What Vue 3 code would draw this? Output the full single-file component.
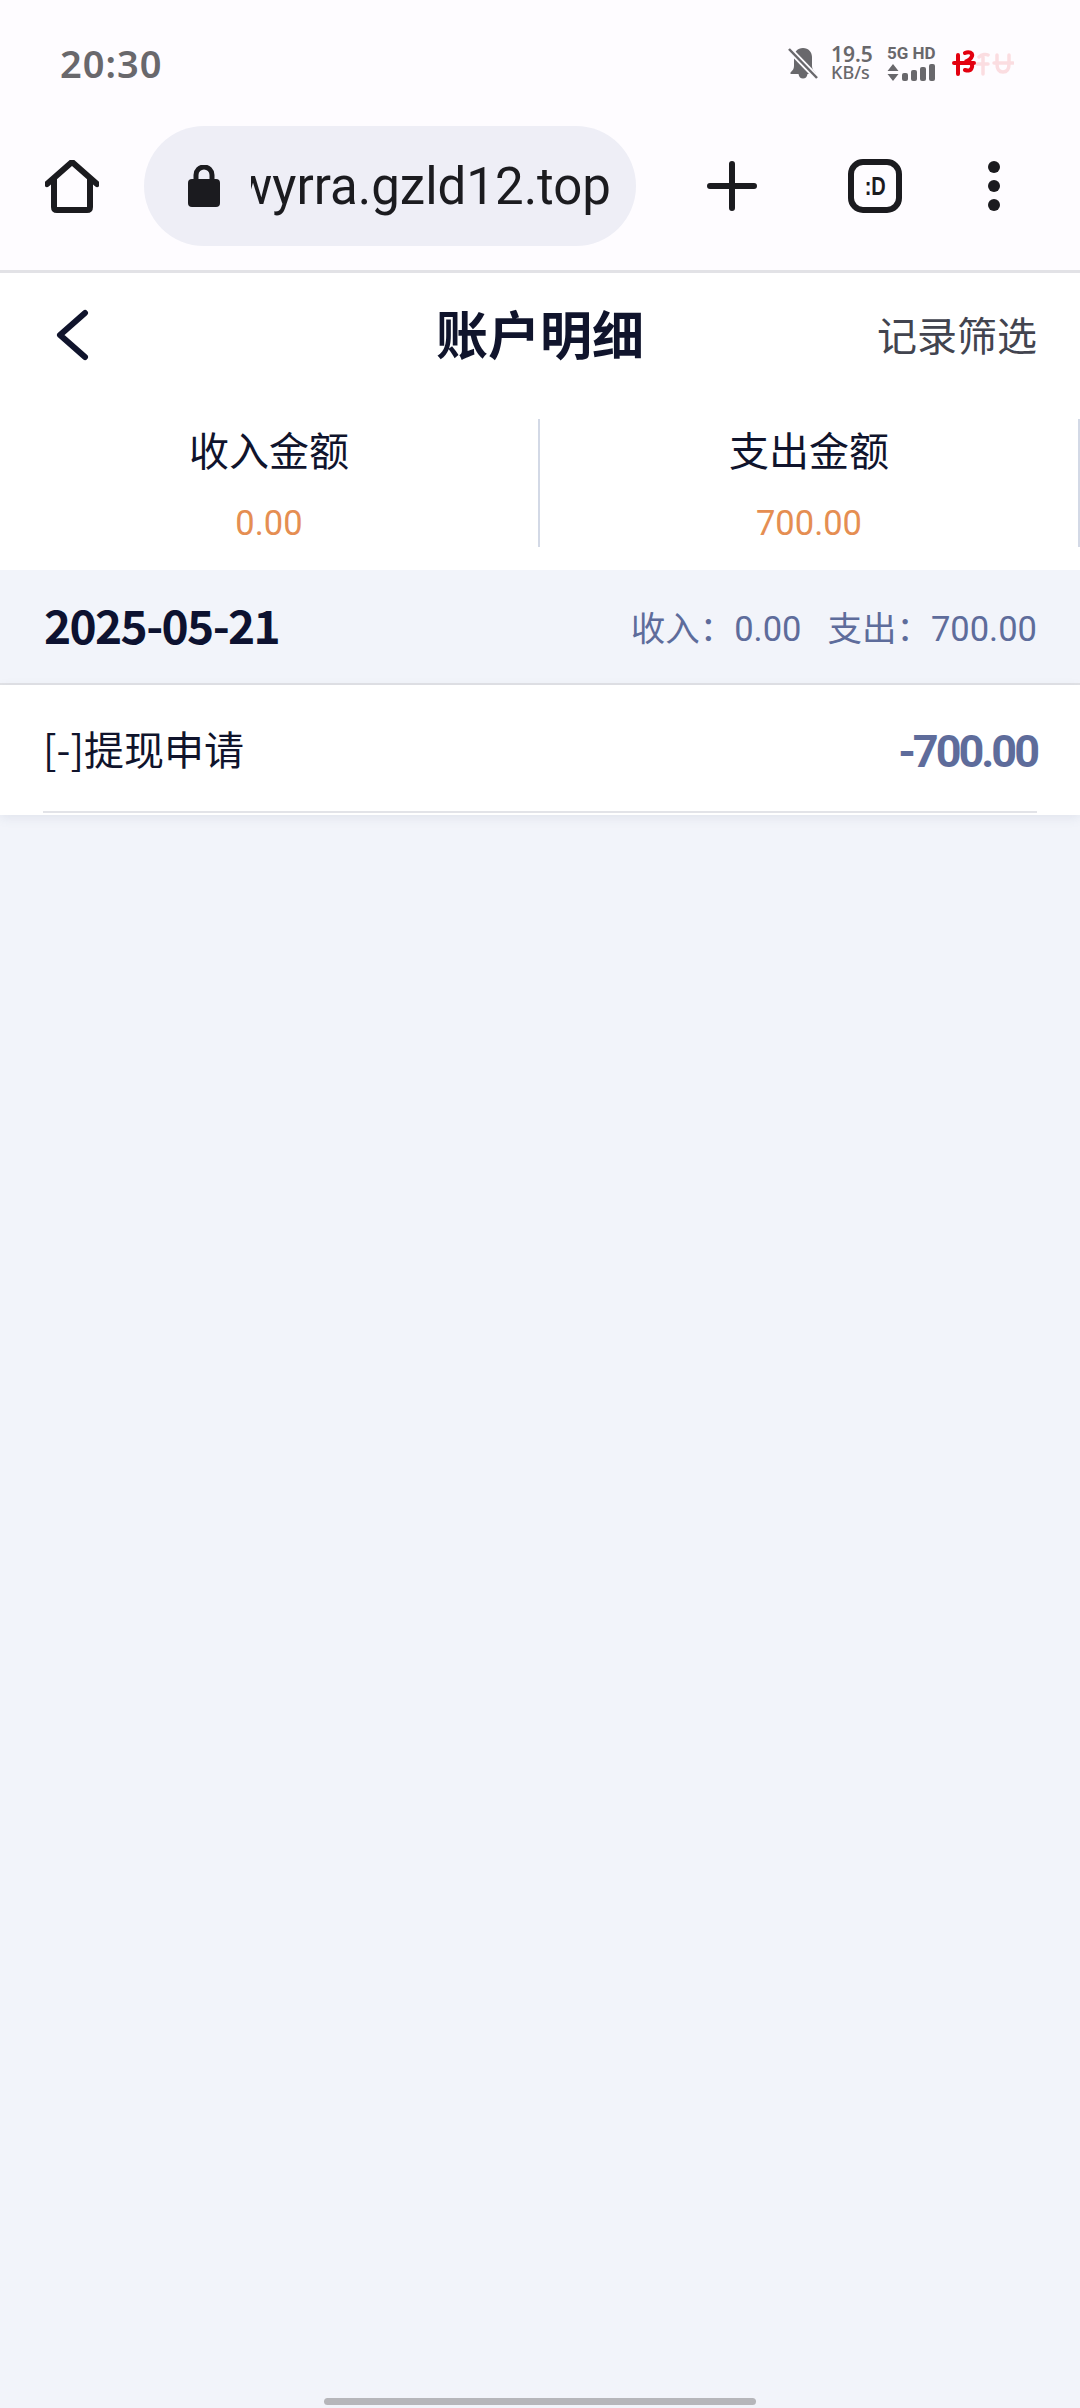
<script setup>
// 账户明细页面的静态数据
const tabs = [
  { label: '收入金额', value: '0.00' },
  { label: '支出金额', value: '700.00' }
]
const signalBars = [8, 11, 14, 17]
</script>

<template>
  <div class="page">
    <div class="chrome">
      <div class="status-bar">
        <span class="time">20:30</span>
        <div class="status-icons">
          <svg class="bell" width="30" height="34" viewBox="0 0 30 34">
            <path d="M15 2c-5.500 0-9 4-9 9v9c0 3-1.500 4.500-3.500 6.500v1.500h8c.5 3 2 4.500 4.500 4.500s4-1.500 4.500-4.500h8v-1.500c-2-2-3.500-3.500-3.500-6.500v-9c0-5-3.500-9-9-9z" fill="#69686c" />
            <path d="M1 3l28 29" stroke="#fefcff" stroke-width="6" />
            <path d="M1 3l28 29" stroke="#69686c" stroke-width="2.500" />
          </svg>
          <div class="speed">
            <span class="speed-num">19.5</span>
            <span class="speed-unit">KB/s</span>
          </div>
          <div class="network">
            <span class="net-label">5G HD</span>
            <div class="net-row">
              <svg width="12" height="17" viewBox="0 0 12 17">
                <path d="M6 0l5.500 7h-11zM6 17l-5.500-7h11z" fill="#69686c" />
              </svg>
              <i v-for="h in signalBars" :key="h" class="bar" :style="{ height: h + 'px' }"></i>
            </div>
          </div>
          <svg class="carrier" width="62" height="26" viewBox="0 0 62 26">
            <g fill="none" stroke="#fbdde1" stroke-width="3.500" stroke-linecap="round">
              <path d="M27 7c3-3 7-3 9-2M31 5v19M25 14h11M42 13h19M45 5v9c0 6 3 8 6 8s6-2 6-8v-9" />
            </g>
            <g fill="none" stroke="#e3000f" stroke-width="4" stroke-linecap="round">
              <path d="M2 13h20M6 5v19M13 3c4-2 8 0 7 3s-4 5-7 6c4 0 8 1 7 5s-4 4-7 3" />
            </g>
          </svg>
        </div>
      </div>

      <div class="toolbar">
        <svg class="home" width="54" height="54" viewBox="0 0 54 54">
          <path d="M2 24L27 2l25 22M9 19v28c0 2 1 3 3 3h30c2 0 3-1 3-3V19" fill="none" stroke="#1b1b1f" stroke-width="6" stroke-linecap="round" stroke-linejoin="round" />
        </svg>
        <div class="url-pill">
          <svg class="lock" width="34" height="42" viewBox="0 0 34 42">
            <path d="M9 16V10a8 8 0 0 1 16 0v6" fill="none" stroke="#1b1b1f" stroke-width="5" />
            <rect x="1" y="14" width="32" height="28" rx="4" fill="#1b1b1f" />
          </svg>
          <div class="url-clip"><span class="url">wyrra.gzld12.top</span></div>
        </div>
        <svg class="plus" width="50" height="50" viewBox="0 0 50 50">
          <path d="M25 3v44M3 25h44" stroke="#1b1b1f" stroke-width="6" stroke-linecap="round" />
        </svg>
        <div class="tab-count"><span>:D</span></div>
        <div class="menu-dots"><i></i><i></i><i></i></div>
      </div>
    </div>

    <div class="content">
      <div class="nav">
        <svg class="back" width="36" height="52" viewBox="0 0 36 52">
          <path d="M31 4L6 26l25 22" fill="none" stroke="#10142c" stroke-width="6" stroke-linecap="round" stroke-linejoin="round" />
        </svg>
        <span class="nav-title">账户明细</span>
        <span class="nav-action">记录筛选</span>
      </div>

      <div class="totals">
        <div v-for="tab in tabs" :key="tab.label" class="total-cell">
          <div class="total-inner">
            <span class="total-label">{{ tab.label }}</span>
            <span class="total-value">{{ tab.value }}</span>
          </div>
        </div>
      </div>

      <div class="day-head">
        <span class="day-date">2025-05-21</span>
        <span class="day-sum"><span>收入：0.00</span><span>支出：700.00</span></span>
      </div>

      <div class="record">
        <div class="record-inner">
          <span class="record-name">[-]提现申请</span>
          <span class="record-amount">-700.00</span>
        </div>
      </div>
    </div>

    <div class="home-bar"></div>
  </div>
</template>

<style>
html,
body {
  margin: 0;
  background: #f2f4fa;
}
</style>

<style scoped>
.page {
  width: 1080px;
  height: 2408px;
  display: flex;
  flex-direction: column;
  overflow: hidden;
  background: #f2f4fa;
  font-family: "Noto Sans CJK SC", "Liberation Sans", sans-serif;
  color: #10142c;
}

.chrome {
  background: #fefcff;
  border-bottom: 3px solid #e2e2e6;
}

.status-bar {
  height: 126px;
  padding: 0 66px 0 60px;
  display: flex;
  align-items: center;
  justify-content: space-between;
}

.time {
  font-family: "Noto Sans", sans-serif;
  font-size: 38px;
  font-weight: 600;
  letter-spacing: 1px;
  color: #69686c;
}

.status-icons {
  display: flex;
  align-items: center;
}

.bell {
  margin-right: 13px;
}

.speed {
  display: flex;
  flex-direction: column;
  width: 56px;
  color: #69686c;
  font-family: "Noto Sans", sans-serif;
}

.speed-num {
  font-size: 21px;
  font-weight: 600;
  line-height: 19px;
}

.speed-unit {
  font-size: 18px;
  font-weight: 500;
  line-height: 17px;
}

.network {
  width: 52px;
  display: flex;
  flex-direction: column;
  gap: 3px;
}

.net-label {
  font-family: "Roboto", sans-serif;
  font-size: 17px;
  font-weight: 700;
  color: #69686c;
  line-height: 15px;
  white-space: nowrap;
}

.net-row {
  display: flex;
  align-items: flex-end;
  gap: 3px;
}

.bar {
  width: 6px;
  border-radius: 2px;
  background: #69686c;
}

.carrier {
  margin-left: 13px;
}

.toolbar {
  height: 144px;
  display: flex;
  align-items: flex-start;
}

.home {
  margin: 34px 0 0 45px;
}

.url-pill {
  width: 492px;
  height: 120px;
  margin-left: 45px;
  border-radius: 60px;
  background: #eeeef6;
  display: flex;
  align-items: center;
  padding: 0 25px 0 43px;
  box-sizing: border-box;
}

.lock {
  flex-shrink: 0;
}

.url-clip {
  flex: 1;
  min-width: 0;
  margin-left: 30px;
  overflow: hidden;
  display: flex;
  justify-content: flex-end;
}

.url {
  flex-shrink: 0;
  font-family: "Roboto", sans-serif;
  font-size: 51px;
  color: #1b1b1f;
  white-space: nowrap;
}

.plus {
  margin: 35px 0 0 71px;
}

.tab-count {
  width: 54px;
  height: 54px;
  margin: 33px 0 0 91px;
  box-sizing: border-box;
  border: 6px solid #1b1b1f;
  border-radius: 15px;
  display: flex;
  align-items: center;
  justify-content: center;
}

.tab-count span {
  font-family: "Liberation Sans", sans-serif;
  font-size: 25px;
  font-weight: 700;
  color: #1b1b1f;
  transform: scaleX(0.8);
}

.menu-dots {
  margin: 35px 0 0 86px;
  display: flex;
  flex-direction: column;
  gap: 7px;
}

.menu-dots i {
  width: 12px;
  height: 12px;
  border-radius: 50%;
  background: #1b1b1f;
}

.nav {
  height: 124px;
  background: #fff;
  position: relative;
  display: flex;
  align-items: center;
  justify-content: center;
}

.back {
  position: absolute;
  left: 54px;
  top: 36px;
}

.nav-title {
  font-size: 52px;
  font-weight: 700;
  line-height: 1;
  margin-top: -5px;
}

.nav-action {
  position: absolute;
  right: 43px;
  top: 37px;
  font-size: 40px;
  line-height: 1.2;
  color: #42444f;
}

.totals {
  height: 173px;
  display: flex;
  background: #fff;
}

.total-cell {
  width: 540px;
  padding-top: 22px;
  box-sizing: border-box;
}

.total-inner {
  height: 128px;
  box-sizing: border-box;
  border-right: 2px solid #d3d9e6;
  display: flex;
  flex-direction: column;
  align-items: center;
}

.total-label {
  font-size: 40px;
  line-height: 60px;
  color: #10142c;
}

.total-value {
  font-family: "Roboto", sans-serif;
  font-size: 34.500px;
  line-height: 44px;
  margin-top: 22px;
  color: #e58e52;
}

.day-head {
  height: 115px;
  box-sizing: border-box;
  padding: 0 43px 6px 44px;
  border-bottom: 2px solid #e1e2e6;
  display: flex;
  align-items: center;
  justify-content: space-between;
}

.day-date {
  font-size: 46px;
  font-weight: 700;
  letter-spacing: -1.600px;
  color: #0d1230;
}

.day-sum {
  display: flex;
  gap: 26px;
  padding-top: 4px;
  font-family: "Roboto", "Noto Sans CJK SC", sans-serif;
  font-size: 34.500px;
  color: #5e6c9b;
}

.record {
  height: 130px;
  background: #fff;
  padding: 0 43px;
  box-shadow: 0 3px 10px rgba(110, 120, 150, 0.12);
}

.record-inner {
  height: 128px;
  box-sizing: border-box;
  border-bottom: 2px solid #e2e3e8;
  display: flex;
  align-items: center;
  justify-content: space-between;
}

.record-name {
  font-size: 40px;
  color: #10142c;
}

.record-amount {
  font-family: "Roboto", sans-serif;
  font-size: 45px;
  font-weight: 700;
  letter-spacing: -3px;
  padding-top: 6px;
  color: #5e6c9b;
}

.home-bar {
  width: 432px;
  height: 7px;
  margin: auto auto 3px;
  border-radius: 4px;
  background: #b6b6ba;
}
</style>
